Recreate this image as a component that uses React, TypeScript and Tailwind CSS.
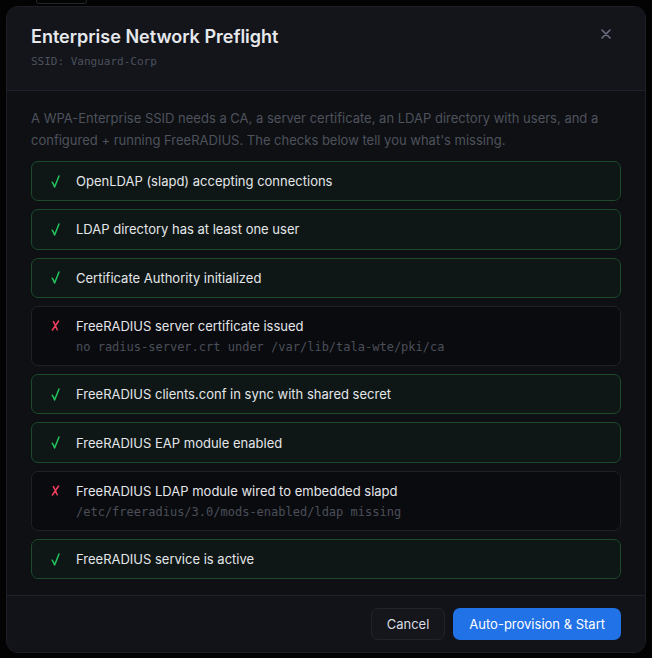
import React from "react";

type Check = { ok: boolean; label: string; detail?: string };

const checks: Check[] = [
  { ok: true, label: "OpenLDAP (slapd) accepting connections" },
  { ok: true, label: "LDAP directory has at least one user" },
  { ok: true, label: "Certificate Authority initialized" },
  {
    ok: false,
    label: "FreeRADIUS server certificate issued",
    detail: "no radius-server.crt under /var/lib/tala-wte/pki/ca",
  },
  { ok: true, label: "FreeRADIUS clients.conf in sync with shared secret" },
  { ok: true, label: "FreeRADIUS EAP module enabled" },
  {
    ok: false,
    label: "FreeRADIUS LDAP module wired to embedded slapd",
    detail: "/etc/freeradius/3.0/mods-enabled/ldap missing",
  },
  { ok: true, label: "FreeRADIUS service is active" },
];

const sans = "font-['Inter','Noto_Sans',sans-serif]";
const mono = "font-['DejaVu_Sans_Mono','Liberation_Mono',monospace]";

function CheckIcon() {
  return (
    <svg width="9" height="13" viewBox="0 0 9 13" fill="none">
      <path
        d="M1.2 7.2 C2 8.4 2.8 10 3.6 12 L8 1"
        stroke="#22c55e"
        strokeWidth="1.5"
        strokeLinecap="round"
        strokeLinejoin="round"
      />
    </svg>
  );
}

function CrossIcon() {
  return (
    <svg width="9" height="11" viewBox="0 0 9 11" fill="none">
      <path
        d="M7.6 1 L1.4 10 M2.4 1.6 C3.8 4 5 7 6.2 9.8"
        stroke="#f43f5e"
        strokeWidth="1.5"
        strokeLinecap="round"
      />
    </svg>
  );
}

function Row({ c }: { c: Check }) {
  return (
    <div
      className={
        "flex items-start gap-[14px] rounded-[7px] border pl-[16px] pr-4 py-[9.15px] " +
        (c.ok ? "border-[#1b4a2c] bg-[#0e1715]" : "border-[#1e2128] bg-[#0a0b0f]")
      }
    >
      <span className="flex h-[20px] w-[14px] shrink-0 items-center justify-center">
        {c.ok ? <CheckIcon /> : <CrossIcon />}
      </span>
      <div className="flex flex-col">
        <span className="text-[13px] leading-[20px] text-[#e4e6ea]">{c.label}</span>
        {c.detail && (
          <span className={mono + " mt-[2px] text-[12px] leading-[18px] text-[#4a4f59]"}>
            {c.detail}
          </span>
        )}
      </div>
    </div>
  );
}

export default function App() {
  return (
    <div className={sans + " relative min-h-[658px] w-full overflow-hidden bg-[#040405]"}>
      {/* faint backdrop content */}
      <div className="absolute left-0 top-[-12px] flex h-[16px] w-full items-center text-[12px] text-[#25272c]">
        <span className="ml-[36px] rounded-[3px] border border-[#25272c] px-[8px] leading-[14px]">OPEN</span>
        <span className="ml-[148px]">2.4 GHz</span>
        <span className="ml-[48px]">0</span>
      </div>

      <div className="relative mx-[6px] mt-[6px] flex w-[640px] flex-col overflow-hidden rounded-[12px] border border-[#1e2027] bg-[#0f1014] shadow-2xl">
        {/* header */}
        <div className="flex items-start justify-between border-b border-[#1f212a] bg-[#13151b] px-6 pb-[19px] pt-[18px]">
          <div className="flex flex-col">
            <h2 className="text-[18px] font-semibold leading-[24px] text-[#e6e8ec]">
              Enterprise Network Preflight
            </h2>
            <div className={mono + " mt-[4px] text-[11px] leading-[18px] text-[#4d515b]"}>
              SSID: Vanguard-Corp
            </div>
          </div>
          <button className="mr-[7px] mt-[1px] flex h-[16px] w-[16px] items-center justify-center text-[#6b7080]">
            <svg width="10" height="10" viewBox="0 0 10 10" fill="none">
              <path d="M1 1L9 9M9 1L1 9" stroke="currentColor" strokeWidth="1.6" strokeLinecap="round" />
            </svg>
          </button>
        </div>

        {/* body */}
        <div className="flex flex-col px-6 pb-4 pt-4">
          <p className="text-[13px] leading-[22px] text-[#4d525c]">
            A WPA-Enterprise SSID needs a CA, a server certificate, an LDAP directory with users, and a
            configured + running FreeRADIUS. The checks below tell you what's missing.
          </p>
          <div className="mt-[10px] flex flex-col gap-2">
            {checks.map((c, i) => (
              <Row key={i} c={c} />
            ))}
          </div>
        </div>

        {/* footer */}
        <div className="flex justify-end gap-2 border-t border-[#1f212a] bg-[#111318] px-6 py-3">
          <button className="h-[32px] rounded-[7px] border border-[#20232a] bg-[#14161c] px-[15px] text-[13px] text-[#d9dce1]">
            Cancel
          </button>
          <button className="h-[32px] rounded-[7px] bg-[#2172e6] px-4 text-[13px] text-white">
            Auto-provision &amp; Start
          </button>
        </div>
      </div>
    </div>
  );
}
